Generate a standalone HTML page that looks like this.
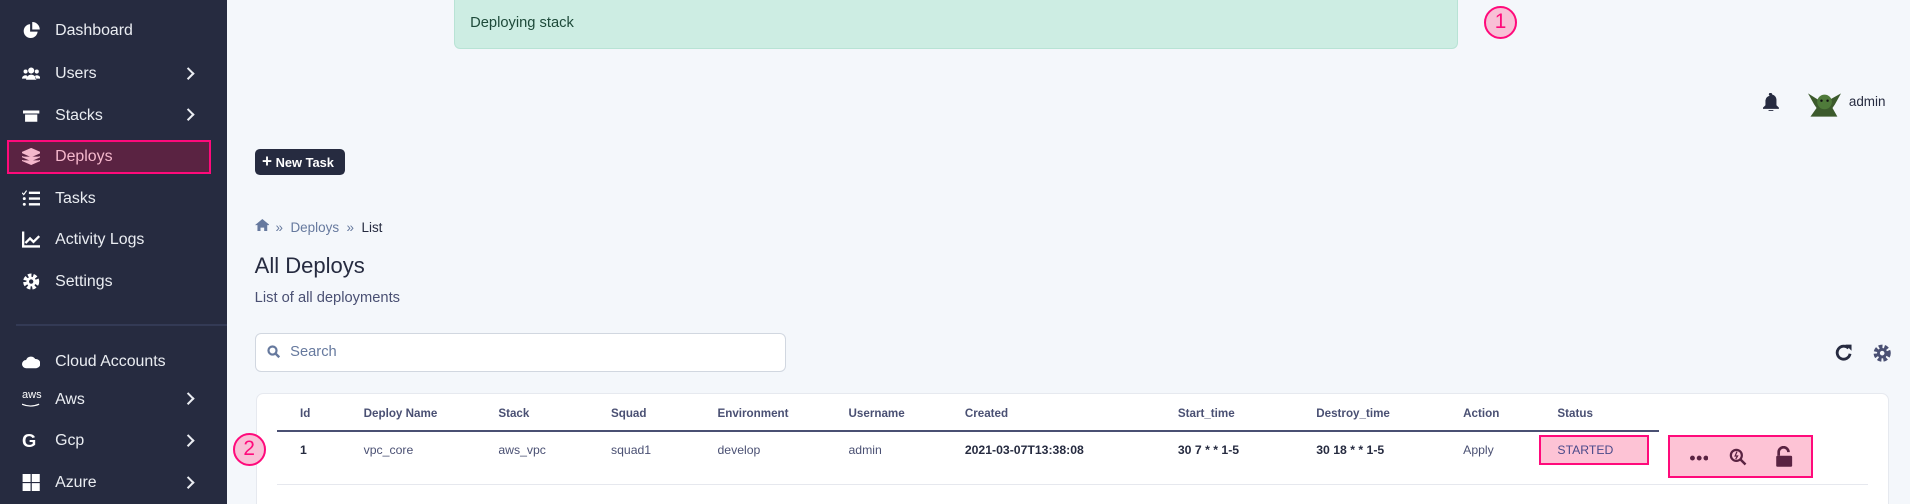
<!DOCTYPE html>
<html><head><meta charset="utf-8"><style>
*{box-sizing:border-box;margin:0;padding:0}
html,body{width:1910px;height:504px;overflow:hidden;background:#f4f7fb}
#w{zoom:1.2244;width:1560px;height:412px;position:relative;font-family:"Liberation Sans",sans-serif;background:#f4f7fb;overflow:hidden}
.a{position:absolute;white-space:nowrap}
#sb{position:absolute;left:0;top:0;width:185px;height:412px;background:#262b40}
.it{position:absolute;left:45px;color:#eaedf2;font-size:13px;line-height:14px}
.ic{position:absolute;left:18px;width:15px;height:14px}
.ch{position:absolute;left:150px;width:7px;height:7px;border-right:2px solid #eaedf2;border-top:2px solid #eaedf2;transform:rotate(45deg)}
.th{position:absolute;top:332px;font-size:9.5px;font-weight:bold;color:#4a5073}
.td{position:absolute;top:362px;font-size:10px;color:#4a5073}
.b{font-weight:bold;color:#262b40}
.circ{position:absolute;width:27px;height:27px;border-radius:50%;border:2px solid #ff0a7b;background:#f8c0d6;color:#ff0a7b;font-size:17px;text-align:center;line-height:23px}
</style></head><body><div id="w">
<div id="sb">
<svg class="ic" style="top:18px" viewBox="0 0 16 16"><path d="M7 2A6.5 6.5 0 1 0 14 9H7z" fill="#fff"/><path d="M9 0v7h7A7 7 0 0 0 9 0z" fill="#fff"/></svg><div class="it" style="top:18px">Dashboard</div>
<svg class="ic" style="top:53px" viewBox="0 0 18 14"><circle cx="9" cy="4" r="3" fill="#fff"/><circle cx="3.5" cy="5" r="2" fill="#fff"/><circle cx="14.5" cy="5" r="2" fill="#fff"/><path d="M4 13a5 5 0 0 1 10 0z M0 12a3.5 3 0 0 1 5-3v3z M18 12a3.5 3 0 0 0-5-3v3z" fill="#fff"/></svg><div class="it" style="top:53px">Users</div><div class="ch" style="top:56px"></div>
<svg class="ic" style="top:87px" viewBox="0 0 18 14"><path d="M1 2h16v3H1zM3 6h12v7H3z" fill="#fff"/></svg><div class="it" style="top:87px">Stacks</div><div class="ch" style="top:90px"></div>
<div class="a" style="left:6px;top:114px;width:166px;height:28px;background:#5a2342;border:2px solid #ff0a7b"></div>
<svg class="ic" style="top:121px" viewBox="0 0 16 14"><path d="M8 0l8 3.5-8 3.5-8-3.5zM0 7l8 3.5L16 7M0 10.3l8 3.5 8-3.5" fill="#f5b8cc" stroke="#f5b8cc"/></svg><div class="it" style="top:121px;color:#f5b8cc">Deploys</div>
<svg class="ic" style="top:155px" viewBox="0 0 16 14"><path d="M6 2h10M6 7h10M6 12h10" stroke="#fff" stroke-width="2"/><path d="M0 2l1.5 1.5L4 0" stroke="#fff" fill="none"/><circle cx="2" cy="7" r="1.3" fill="#fff"/><circle cx="2" cy="12" r="1.3" fill="#fff"/></svg><div class="it" style="top:155px">Tasks</div>
<svg class="ic" style="top:189px" viewBox="0 0 16 14"><path d="M1 0v13h15" stroke="#fff" stroke-width="2" fill="none"/><path d="M3 10l4-4 3 3 5-5" stroke="#fff" stroke-width="2" fill="none"/></svg><div class="it" style="top:189px">Activity Logs</div>
<svg class="ic" style="top:223px" viewBox="0 0 16 16"><circle cx="8" cy="8" r="5.5" fill="none" stroke="#fff" stroke-width="4" stroke-dasharray="3 1.6"/><circle cx="8" cy="8" r="4.5" fill="#fff"/><circle cx="8" cy="8" r="2" fill="#262b40"/></svg><div class="it" style="top:223px">Settings</div>
<div class="a" style="left:13px;top:326px;width:172px;height:1px;background:#333a55;top:265px"></div>
<svg class="ic" style="top:288px" viewBox="0 0 18 13"><path d="M4 13a4 4 0 0 1 0-8 5 5 0 0 1 9-1 4.5 4.5 0 0 1 1 9z" fill="#fff"/></svg><div class="it" style="top:288px">Cloud Accounts</div>
<div class="a" style="left:18px;top:318px;color:#fff;font-size:9px">aws</div><svg class="a" style="left:18px;top:329px" width="15" height="4"><path d="M0 1q7 3 14 0" stroke="#fff" fill="none"/></svg><div class="it" style="top:319px">Aws</div><div class="ch" style="top:322px"></div>
<div class="a" style="left:18px;top:351px;color:#fff;font-size:15px;font-weight:bold">G</div><div class="it" style="top:353px">Gcp</div><div class="ch" style="top:356px"></div>
<svg class="ic" style="top:387px" viewBox="0 0 14 14"><path d="M0 0h6.5v6.5H0zM7.5 0H14v6.5H7.5zM0 7.5h6.5V14H0zM7.5 7.5H14V14H7.5z" fill="#fff"/></svg><div class="it" style="top:387px">Azure</div><div class="ch" style="top:390px"></div>
</div>

<div class="a" style="left:371px;top:-5px;width:820px;height:45px;background:#cdede3;border:1px solid #b8e3d5;border-radius:5px"></div>
<div class="a" style="left:384px;top:12px;font-size:12px;color:#1e4a3a">Deploying stack</div>
<div class="circ" style="left:1212px;top:5px">1</div>

<svg class="a" style="left:1440px;top:76px" width="13" height="15" viewBox="0 0 13 15"><path d="M6.5 0a1 1 0 0 1 1 1.2A4.5 4.5 0 0 1 11 6v4l2 2v1H0v-1l2-2V6a4.5 4.5 0 0 1 3.5-3.8A1 1 0 0 1 6.5 0zM4.5 14h4a2 2 0 0 1-4 0z" fill="#262b40"/></svg>
<svg class="a" style="left:1477px;top:70px" width="27" height="27" viewBox="0 0 27 27"><path d="M0 6l8 5 5-3 5 3 9-5-5 9-2 3 4 7H2l5-7-2-3z" fill="#3c5a2c"/><circle cx="13.5" cy="13" r="6" fill="#4f7a3a"/><circle cx="11" cy="12" r="1" fill="#111"/><circle cx="16" cy="12" r="1" fill="#111"/></svg>
<div class="a" style="left:1510px;top:77px;font-size:11px;color:#262b40">admin</div>

<div class="a" style="left:208px;top:122px;width:74px;height:21px;background:#262b40;border-radius:4px;color:#fff;font-size:10.5px;font-weight:bold;line-height:21px;padding-left:6px"><span style="font-size:14px">+</span> New Task</div>

<svg class="a" style="left:208px;top:179px" width="12" height="10" viewBox="0 0 12 10"><path d="M6 0l6 5h-2v5H7.5V7h-3v3H2V5H0z" fill="#66799e"/></svg>
<div class="a" style="left:225px;top:180px;font-size:11px;color:#66799e">»&nbsp;&nbsp;Deploys&nbsp;&nbsp;»&nbsp;&nbsp;<span style="color:#262b40">List</span></div>
<div class="a" style="left:208px;top:207px;font-size:18px;color:#262b40">All Deploys</div>
<div class="a" style="left:208px;top:237px;font-size:12px;color:#4a5073">List of all deployments</div>

<div class="a" style="left:208px;top:272px;width:434px;height:32px;background:#fff;border:1px solid #d1d7e0;border-radius:5px"></div>
<svg class="a" style="left:218px;top:282px" width="11" height="11" viewBox="0 0 11 11"><circle cx="4.5" cy="4.5" r="3.3" stroke="#66799e" stroke-width="1.8" fill="none"/><path d="M7 7l3 3" stroke="#66799e" stroke-width="2"/></svg>
<div class="a" style="left:237px;top:281px;font-size:12px;color:#66799e">Search</div>

<svg class="a" style="left:1499px;top:281px" width="14" height="14" viewBox="0 0 14 14"><path d="M11 3.5A5.3 5.3 0 1 0 12.3 8" stroke="#262b40" stroke-width="2.3" fill="none"/><path d="M8.5 0.5h5v5z" fill="#262b40"/></svg>
<svg class="a" style="left:1530px;top:281px" width="15" height="15" viewBox="0 0 16 16"><circle cx="8" cy="8" r="5.5" fill="none" stroke="#4a5073" stroke-width="4" stroke-dasharray="3 1.6"/><circle cx="8" cy="8" r="4.5" fill="#4a5073"/><circle cx="8" cy="8" r="2" fill="#f4f7fb"/></svg>

<div class="a" style="left:209px;top:321px;width:1334px;height:100px;background:#fff;border:1px solid #e6e9ef;border-radius:6px"></div>
<div class="th" style="left:245px">Id</div><div class="th" style="left:297px">Deploy Name</div><div class="th" style="left:407px">Stack</div><div class="th" style="left:499px">Squad</div><div class="th" style="left:586px">Environment</div><div class="th" style="left:693px">Username</div><div class="th" style="left:788px">Created</div><div class="th" style="left:962px">Start_time</div><div class="th" style="left:1075px">Destroy_time</div><div class="th" style="left:1195px">Action</div><div class="th" style="left:1272px">Status</div>
<div class="a" style="left:226px;top:351px;width:1129px;height:2px;background:#4a5073"></div>
<div class="a" style="left:226px;top:395px;width:1300px;height:1px;background:#e6e8ee"></div>
<div class="td b" style="left:245px">1</div><div class="td" style="left:297px">vpc_core</div><div class="td" style="left:407px">aws_vpc</div><div class="td" style="left:499px">squad1</div><div class="td" style="left:586px">develop</div><div class="td" style="left:693px">admin</div><div class="td b" style="left:788px">2021-03-07T13:38:08</div><div class="td b" style="left:962px">30 7 * * 1-5</div><div class="td b" style="left:1075px">30 18 * * 1-5</div><div class="td" style="left:1195px">Apply</div>
<div class="circ" style="left:190px;top:354px">2</div>
<div class="a" style="left:1257px;top:355px;width:90px;height:25px;background:#fdc3d5;border:2px solid #ff0a7b"></div>
<div class="a" style="left:1272px;top:362px;font-size:10px;color:#4a4a8a">STARTED</div>
<div class="a" style="left:1362px;top:355px;width:119px;height:35px;background:#fdc3d5;border:2px solid #ff0a7b"></div>
<svg class="a" style="left:1380px;top:372px" width="15" height="5"><circle cx="2" cy="2.5" r="2" fill="#5a2342"/><circle cx="7.5" cy="2.5" r="2" fill="#5a2342"/><circle cx="13" cy="2.5" r="2" fill="#5a2342"/></svg>
<svg class="a" style="left:1412px;top:366px" width="15" height="15" viewBox="0 0 15 15"><circle cx="6" cy="6" r="4.5" stroke="#5a2342" stroke-width="1.8" fill="none"/><path d="M9.5 9.5l4 4" stroke="#5a2342" stroke-width="2"/><path d="M6.5 3L5 6.5h2L5.5 9" stroke="#5a2342" fill="none"/></svg>
<svg class="a" style="left:1450px;top:364px" width="15" height="18" viewBox="0 0 15 18"><path d="M3 8V5a4 4 0 0 1 8 0" stroke="#5a2342" stroke-width="2.2" fill="none"/><rect x="1" y="8" width="13" height="9" rx="1" fill="#5a2342"/></svg>
</div></body></html>
